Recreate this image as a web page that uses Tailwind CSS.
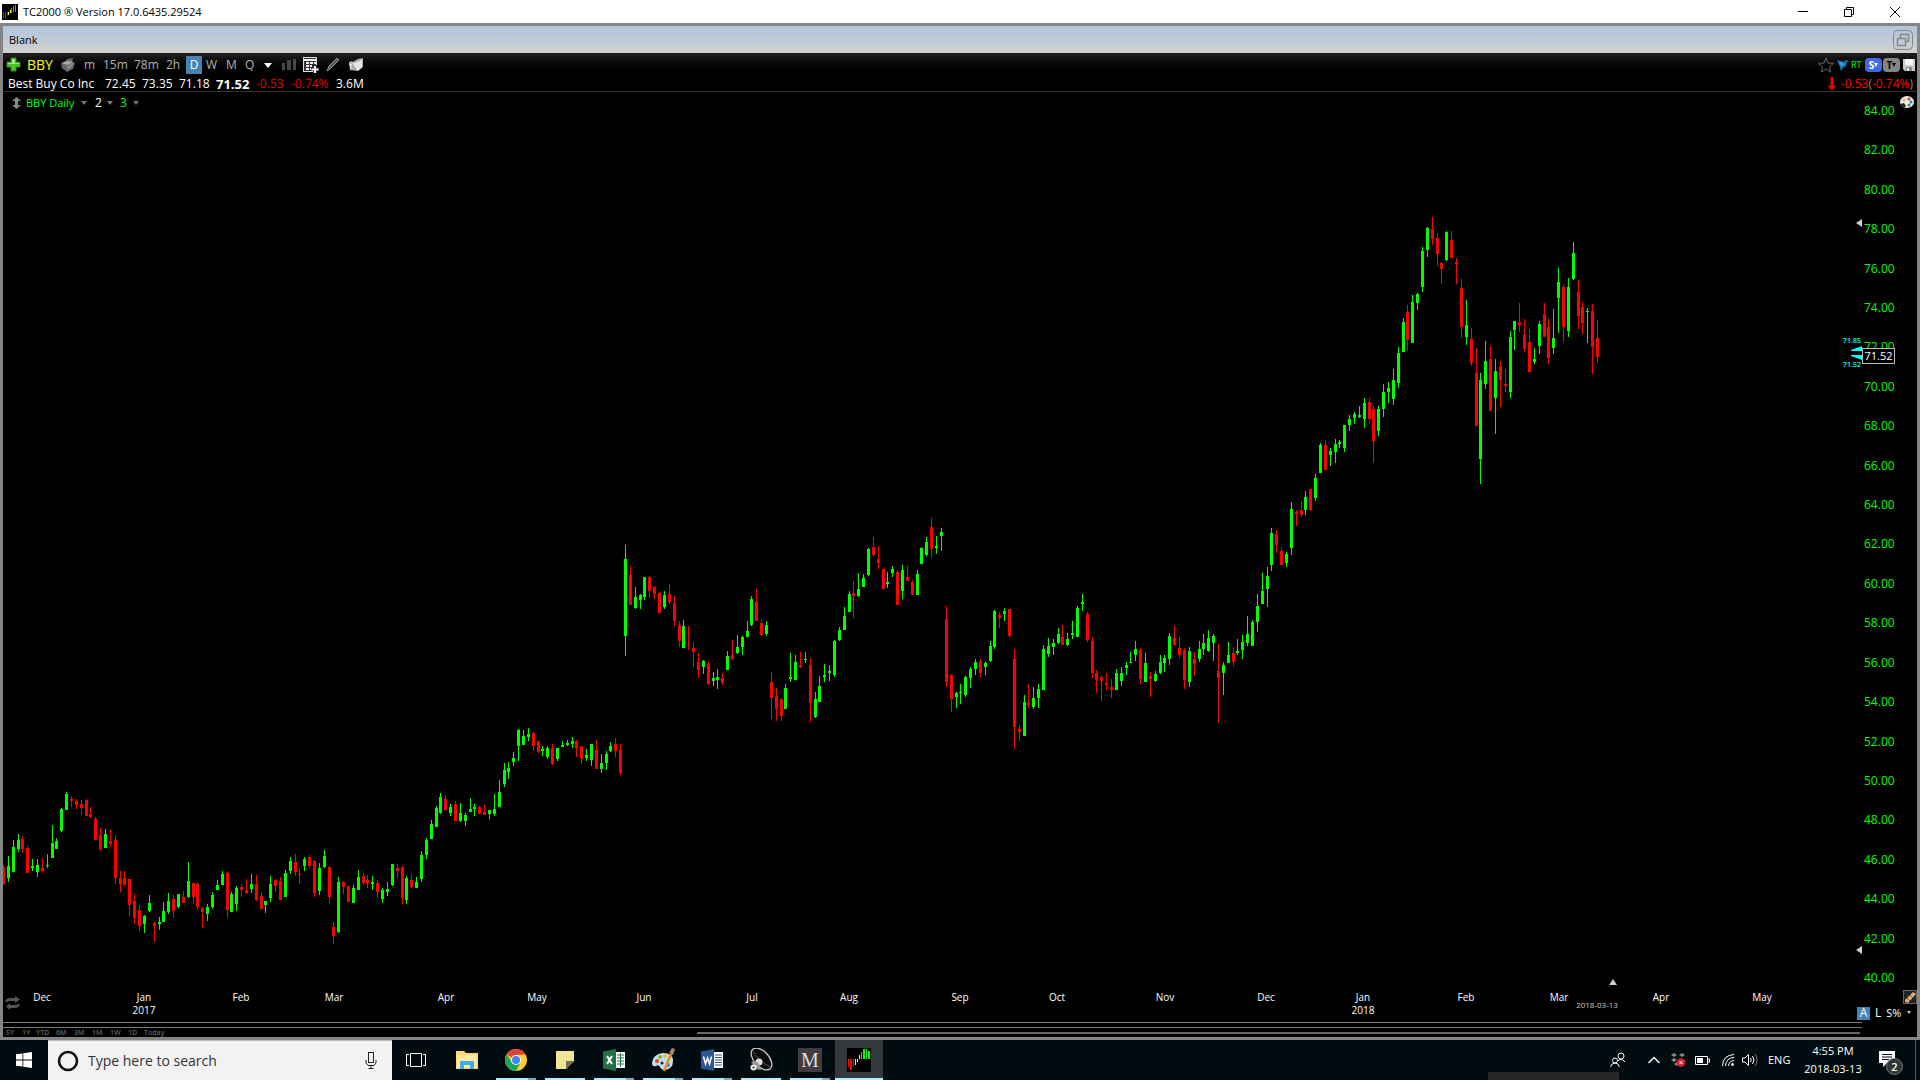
<!DOCTYPE html>
<html lang="en">
<head>
<meta charset="utf-8">
<title>TC2000 - BBY Daily</title>
<script src="https://cdn.jsdelivr.net/npm/@tailwindcss/browser@4"></script>
</head>
<body class="flex h-screen flex-col overflow-hidden bg-black font-['Open_Sans','Noto_Sans',sans-serif] text-xs leading-4 text-white">

<!-- Title bar -->
<header class="flex h-[23px] shrink-0 items-center bg-white pr-0.5 pl-0.5 text-black">
  <svg class="size-4" viewBox="0 0 16 16" shape-rendering="crispEdges"><rect width="16" height="16"/><path d="M1 8h1v6H1zM3 8h1v7H3zM5 8h1v3H5z" fill="#f00"/><path d="M6 8h1v3H6zM8 6h1v3H8z" fill="#ff0"/><path d="M9 4h1v5H9zM11 2h1v6h-1zM13 1h1v7h-1z" fill="#0d0"/></svg>
  <h1 class="ml-[5px] text-[11px]">TC2000 ® Version 17.0.6435.29524</h1>
  <div class="ml-auto flex">
    <button aria-label="Minimize" class="flex w-[46px] justify-center"><svg class="size-5" viewBox="0 0 20 20"><path d="M5 9.500h10" stroke="#000"/></svg></button>
    <button aria-label="Restore" class="flex w-[46px] justify-center"><svg class="size-5" viewBox="0 0 20 20" fill="none" stroke="#000"><path d="M5.500 7.500h7v7h-7zM7.500 7V5.500h7v7H13"/></svg></button>
    <button aria-label="Close" class="flex w-[46px] justify-center"><svg class="size-5" viewBox="0 0 20 20"><path d="M5 5l10 10M15 5L5 15" stroke="#000"/></svg></button>
  </div>
</header>

<!-- Chart window -->
<main class="flex min-h-0 flex-1 flex-col border-[3px] border-[#858585]">
  <div class="flex h-[27px] shrink-0 items-center bg-linear-to-b from-[#b0c4de] to-[#d0d0d0] px-1.5 pr-1 text-black">
    <h2 class="text-[11px]">Blank</h2>
    <button aria-label="Restore chart" class="ml-auto"><svg class="size-5" viewBox="0 0 20 20" fill="none" stroke="#888"><rect x=".5" y=".5" width="19" height="19" rx="4"/><path d="M4.500 8.500h8v7h-8zM7.500 8V4.500h8v7H13" stroke-width="1.500"/></svg></button>
  </div>

  <div class="flex h-[23px] shrink-0 items-center bg-linear-to-b from-[#202020] to-black pl-[3px] text-[#b0b0b0]">
    <button aria-label="Add" class="w-[21px]"><svg class="size-[15px]" viewBox="0 0 15 15"><path d="M5 1h5v4h4v5h-4v4H5v-4H1V5h4z" fill="#4ac02c" stroke="#2a8a18"/><path d="M6 2h3v4h4v1H2V6h4z" fill="#a0e880"/></svg></button>
    <button class="w-[33px] text-left text-sm text-[#ff0]">BBY</button>
    <button aria-label="Flag" class="w-6"><svg class="size-4" viewBox="0 0 16 16"><path d="M1 6l5-2 1-2 6-1-1 4 3 1-2 6-6 3-5-4z" fill="#666"/><path d="M2 6l5 2 7-3-7-1z" fill="#aaa"/><path d="M7 9l6-3-1 4-5 3z" fill="#888"/></svg></button>
    <button class="w-[19px] text-left">m</button>
    <button class="w-[31px] text-left">15m</button>
    <button class="w-8 text-left">78m</button>
    <button class="w-5 text-left">2h</button>
    <button class="mr-1 h-[18px] w-4 bg-[#4682b4] text-center text-white">D</button>
    <button class="w-5 text-left">W</button>
    <button class="w-[19px] text-left">M</button>
    <button class="w-[19px] text-left">Q</button>
    <button aria-label="More" class="w-[18px]"><svg class="h-2 w-2" viewBox="0 0 8 8"><path d="M0 2h8L4 7z" fill="#fff"/></svg></button>
    <button aria-label="Bars" class="w-[21px]"><svg class="h-3 w-3.5" viewBox="0 0 14 12" fill="#484848"><rect y="4" width="3" height="7"/><rect x="5" y="1" width="4" height="10"/><rect x="11" width="3" height="11"/></svg></button>
    <button aria-label="Scan table" class="w-[23px]"><svg class="size-4" viewBox="0 0 16 16"><rect x=".5" y=".5" width="13" height="14" fill="#333" stroke="#ddd"/><path d="M1 3h12" stroke="#eee" stroke-width="2"/><path d="M3 5h3v2H3zM7 5h3v2H7zM11 5h2v2h-2zM3 8h3v2H3zM7 8h2v2H7zM3 11h3v2H3zM7 11h2v2H7z" fill="#eee"/><path d="M12 8v8M8 12h8" stroke="#222" stroke-width="4"/><path d="M12 9v7M8.500 12.500h7" stroke="#fff" stroke-width="2"/></svg></button>
    <button aria-label="Draw" class="w-[22px]"><svg class="size-[15px]" viewBox="0 0 15 15"><path d="M1 14l2-5 8-8 2 2-8 8z" fill="#555" stroke="#999"/></svg></button>
    <button aria-label="Folders"><svg class="h-3.5 w-4" viewBox="0 0 16 14"><path d="M1 4l3-1 1 1 3-2 2-1 5-1v9l-5 4-8-1z" fill="#aaa"/><path d="M4 5l6-1 4-3v8l-4 4z" fill="#e4e4e4"/><path d="M1 5l3 1-1 7z" fill="#ddd"/></svg></button>
    <div class="ml-auto flex items-center pr-0.5">
      <button aria-label="Favorite" class="mr-[3px]"><svg class="size-4" viewBox="0 0 16 16"><path d="M8 1l2 5 5.500.3-4 3.500 1.200 5.200L8 12l-4.700 3 1.200-5.200-4-3.500L6 6z" fill="none" stroke="#666"/></svg></button>
      <button aria-label="Share" class="mr-0.5"><svg class="size-3" viewBox="0 0 12 12"><path d="M0 1l7 2 2-2 3 1-2 1-1 4-3 2-2 3-1-4z" fill="#1677b8"/><path d="M2 3l6 2-4 2z" fill="#48a8e0"/></svg></button>
      <span class="w-3.5 text-[9px] text-[#0f0]">RT</span>
      <button class="mr-px flex h-3.5 w-[17px] items-center justify-center rounded-sm bg-[#4169e1] text-[10px] font-bold text-white">S<svg class="size-1" viewBox="0 0 4 4"><path d="M0 0h4L2 4z" fill="#fff"/></svg></button>
      <button class="mr-[3px] flex h-3.5 w-[17px] items-center justify-center rounded-sm bg-[#858585] text-[10px] font-bold text-black">T<svg class="size-1" viewBox="0 0 4 4"><path d="M0 0h4L2 4z"/></svg></button>
      <button aria-label="Save"><svg class="size-3" viewBox="0 0 12 12"><path d="M0 0h12v12H2l-2-2z" fill="#ccc"/><path d="M2 0h8v6H2z" fill="#f5f5f5"/><path d="M3 8h6v4H3z" fill="#888"/><path d="M4 9h2v3H4z" fill="#eee"/></svg></button>
    </div>
  </div>

  <div class="flex h-4 shrink-0 items-center border-b border-[#333] pl-[5px]">
    <span class="w-[97px]">Best Buy Co Inc</span>
    <span class="w-[37px]">72.45</span>
    <span class="w-[37px]">73.35</span>
    <span class="w-[37px]">71.18</span>
    <span class="w-10 text-[13px] font-bold">71.52</span>
    <span class="w-[35px] text-[#e00000]">-0.53</span>
    <span class="w-[45px] text-[#e00000]">-0.74%</span>
    <span>3.6M</span>
    <div class="ml-auto flex items-center pr-1 text-[#f00]">
      <svg class="mr-1 h-3.5 w-2.5" viewBox="0 0 10 14"><path d="M3 0h4v8h3l-5 6-5-6h3z" fill="#500"/><path d="M4 0h2v9h3l-4 4-4-4h3z" fill="#f00"/></svg>
      <span>-0.53<span class="text-[#888]">(</span>-0.74%<span class="text-[#888]">)</span></span>
    </div>
  </div>

  <section class="flex min-h-0 flex-1">
    <div class="relative min-w-0 flex-1">
      <svg id="candles" class="absolute inset-0 size-full" viewBox="3 92 1859 894" preserveAspectRatio="none" shape-rendering="crispEdges" aria-label="BBY daily candlestick chart"></svg>
      <div class="relative flex items-center pt-[3px] pl-[9px] text-[#0f0]">
        <svg class="mr-[5px] h-3 w-[9px]" viewBox="0 0 9 12" fill="#888"><path d="M4.500 0L9 4H6v4h3l-4.500 4L0 8h3V4H0z"/></svg>
        <button class="w-[55px] text-left text-[11px]">BBY Daily</button>
        <svg class="mr-2 size-1.5" viewBox="0 0 6 6"><path d="M0 1h6L3 5z" fill="#777"/></svg>
        <button class="w-3 text-left text-white">2</button>
        <svg class="mr-[7px] size-1.5" viewBox="0 0 6 6"><path d="M0 1h6L3 5z" fill="#777"/></svg>
        <button class="w-[13px] text-left">3</button>
        <svg class="size-1.5" viewBox="0 0 6 6"><path d="M0 1h6L3 5z" fill="#777"/></svg>
      </div>
      <!-- last price markers -->
      <div class="absolute right-0 top-[244px] flex flex-col items-end text-[7px] leading-[10px] font-semibold text-[#0ff]">
        <span class="pr-px">71.85</span>
        <svg class="h-3.5 w-[11px]" viewBox="0 0 11 14" fill="#0ff"><path d="M0 4l11-4v5H0zM0 9h11v5L0 10z"/></svg>
        <span class="pr-px">71.52</span>
      </div>
      <svg class="absolute right-0 top-[127px] h-2 w-1.5" viewBox="0 0 6 8"><path d="M6 0v8L0 4z" fill="#ccc"/></svg>
      <svg class="absolute right-0 bottom-8 h-2 w-1.5" viewBox="0 0 6 8"><path d="M6 0v8L0 4z" fill="#ccc"/></svg>
    </div>
    <!-- price axis -->
    <div class="relative flex w-[55px] flex-col justify-between pt-[11px] pl-0.5 text-xs text-[#0f0]" id="prices">
      <svg class="absolute right-[3px] top-1 h-3 w-3.5" viewBox="0 0 14 12"><ellipse cx="7" cy="6" rx="7" ry="6" fill="#eee"/><circle cx="4" cy="4" r="1.500" fill="#e8b020"/><circle cx="9" cy="3" r="1.500" fill="#d33"/><circle cx="11" cy="6" r="1.500" fill="#28c"/><circle cx="9" cy="9" r="1.500" fill="#393"/><path d="M0 8l4-1 2 3-2 2z" fill="#222"/></svg>
      <span class="absolute left-0 top-64 z-10 h-4 w-[33px] border border-[#bbb] bg-black text-center text-[11px] leading-[14px] text-white">71.52</span>
    </div>
  </section>

  <!-- time axis -->
  <section class="flex h-9 shrink-0">
    <div id="months" class="relative flex-1 text-[10px] leading-[13px]">
      <svg class="absolute left-0.5 top-2.5 h-3.5 w-4" viewBox="0 0 16 14"><path d="M0 6q1-4 5-4h5V0l5 3.500L10 7V5H5Q3 5 2 6zM15 8q-1 4-5 4H5v2l-4-3.500L5 7v2h5q2 0 3-1z" fill="#555"/></svg>
    </div>
    <div class="flex w-[63px] flex-col items-end">
      <button aria-label="Erase" class="mt-1"><svg class="size-3.5" viewBox="0 0 14 14"><rect x=".5" y=".5" width="13" height="13" fill="#222" stroke="#666"/><path d="M2 10l8-8 3 2-8 9-3-1z" fill="#e0a878"/><path d="M4 8l3 3M7 5l3 3" stroke="#8a5a38"/></svg></button>
      <div class="mt-0.5 flex h-3.5 w-full items-center">
        <button class="mr-[5px] ml-[3px] h-[13px] w-[13px] bg-[#4682b4] text-center leading-3">A</button>
        <button class="mr-[5px]">L</button>
        <button class="text-[11px]">S%</button>
        <svg class="ml-auto mr-1.5 h-1 w-1" viewBox="0 0 4 4"><path d="M0 0h4L2 3z" fill="#ccc"/></svg>
      </div>
    </div>
  </section>

  <div class="mr-[55px] h-1.5 shrink-0 border-y border-[#777]"></div>
  <div class="mr-[57px] flex h-[9px] shrink-0 items-center pl-[3px] text-[7px] leading-[9px] font-semibold text-[#606060]">
    <button class="w-4 text-left">5Y</button><button class="w-3.5 text-left">1Y</button><button class="w-5 text-left">YTD</button><button class="w-[18px] text-left">6M</button><button class="w-[18px] text-left">3M</button><button class="w-[18px] text-left">1M</button><button class="w-[18px] text-left">1W</button><button class="w-4 text-left">1D</button><button class="w-6 text-left">Today</button>
    <div class="ml-[529px] h-0.5 flex-1 bg-[#666]"></div>
  </div>
</main>

<!-- Taskbar -->
<footer class="relative flex h-10 shrink-0 bg-[#000c10]">
  <button aria-label="Start" class="flex w-12 items-center justify-center"><svg class="size-4" viewBox="0 0 16 16" fill="#fff"><path d="M0 2.300L6.500 1.400V7.600H0zM7.300 1.300L16 0v7.600H7.300zM0 8.400h6.500v6.200L0 13.700zM7.300 8.400H16V16l-8.700-1.300z"/></svg></button>
  <label class="flex w-[344px] items-center border-t border-[#bbb] bg-[#f2f2f2] pr-[15px] pl-[9px]">
    <svg class="mr-[9px] size-[22px]" viewBox="0 0 22 22"><circle cx="11" cy="11" r="9" fill="none" stroke="#111" stroke-width="2.600"/></svg>
    <input aria-label="Search" placeholder="Type here to search" class="min-w-0 flex-1 text-sm text-[#333] outline-none placeholder:text-[#333]">
    <svg class="h-[17px] w-3" viewBox="0 0 12 17" fill="none" stroke="#222"><rect x="3.500" y=".5" width="5" height="10"/><path d="M1 8v3l2 2.500h6l2-2.500V8M6 13.500v3M3.500 16.500h5"/></svg>
  </label>
  <button aria-label="Task view" class="mr-[3px] flex w-12 items-center justify-center"><svg class="h-4 w-5" viewBox="0 0 20 16" fill="none" stroke="#fff"><path d="M4.500 1.500h11v13h-11zM3 2.500H.5v11H3M17 2.500h2.500v11H17"/></svg></button>
  <div class="flex gap-px">
    <button aria-label="File Explorer" class="flex w-12 items-center justify-center"><svg class="h-5 w-[22px]" viewBox="0 0 22 20"><path d="M0 1h8l2 2h12v16H0z" fill="#ffd86a"/><path d="M1 5h20v13H1z" fill="#ffe8a0"/><path d="M4 19v-7q0-1 1-1h12q1 0 1 1v7h-4v-4H8v4z" fill="#3bb0e8"/></svg></button>
    <button aria-label="Chrome" class="relative flex w-12 items-center justify-center"><svg class="size-[22px]" viewBox="0 0 22 22"><circle cx="11" cy="11" r="11" fill="#fc3"/><path d="M11 11L1.500 5.500A11 11 0 0120.500 5.500L11 6z" fill="#dc4437"/><path d="M1.500 5.500A11 11 0 0011 22l4.500-8.500L11 15 7 13z" fill="#1ea362"/><circle cx="11" cy="11" r="5" fill="#fff"/><circle cx="11" cy="11" r="4" fill="#4285f4"/></svg><span class="absolute bottom-0 left-1 h-0.5 w-10 border-r-8 border-[#7fa9b5] bg-[#aeeefc]"></span></button>
    <button aria-label="Sticky Notes" class="relative flex w-12 items-center justify-center"><svg class="size-[18px]" viewBox="0 0 18 18"><path d="M0 0h18v18H0z" fill="#f2e597"/><path d="M18 10v8h-8z" fill="#000c10"/><path d="M10 10h8l-8 8z" fill="#76704a"/></svg><span class="absolute bottom-0 left-1 h-0.5 w-10 bg-[#aeeefc]"></span></button>
    <button aria-label="Excel" class="relative flex w-12 items-center justify-center"><svg class="size-[22px]" viewBox="0 0 22 22"><path d="M12 3h10v16H12z" fill="#fff"/><path d="M14 6h7M14 9h7M14 12h7M14 15h7M17.500 4v14" stroke="#217346"/><path d="M0 2.500L13 0v22L0 19.500z" fill="#217346"/><path d="M4 7l5 8M9 7l-5 8" stroke="#fff" stroke-width="2"/></svg><span class="absolute bottom-0 left-1 h-0.5 w-10 border-r-8 border-[#7fa9b5] bg-[#aeeefc]"></span></button>
    <button aria-label="Paint" class="relative flex w-12 items-center justify-center"><svg class="h-6 w-6" viewBox="0 0 24 24"><path d="M1 15Q2 6 12 5q10 0 10 8t-8 9q-4 0-5-3t-4-1q-4 1-4-3z" fill="#c4e0f0"/><circle cx="6" cy="13" r="2" fill="#d43"/><circle cx="9" cy="9" r="2" fill="#7b3"/><circle cx="14" cy="8" r="2" fill="#eb3"/><circle cx="11" cy="15" r="1.500" fill="#123"/><circle cx="17" cy="17" r="2" fill="#48c"/><path d="M20 6l-7 17" stroke="#e88a28" stroke-width="2.500"/><path d="M18 5l3-5 3 1-2 6z" fill="#b08860"/></svg><span class="absolute bottom-0 left-1 h-0.5 w-10 border-r-8 border-[#7fa9b5] bg-[#aeeefc]"></span></button>
    <button aria-label="Word" class="relative flex w-12 items-center justify-center"><svg class="size-[22px]" viewBox="0 0 22 22"><path d="M12 3h10v16H12z" fill="#fff"/><path d="M14 6h7M14 8.500h7M14 11h7M14 13.500h7M14 16h7" stroke="#2b579a"/><path d="M0 2.500L13 0v22L0 19.500z" fill="#2b579a"/><path d="M2.500 7.500L4.500 15l2-6 2 6 2-7.500" fill="none" stroke="#fff" stroke-width="1.500"/></svg><span class="absolute bottom-0 left-1 h-0.5 w-10 border-r-8 border-[#7fa9b5] bg-[#aeeefc]"></span></button>
    <button aria-label="Audio" class="relative flex w-12 items-center justify-center"><svg class="h-6 w-6" viewBox="0 0 24 24"><ellipse cx="12.500" cy="11" rx="13" ry="7.500" transform="rotate(48 12.500 11)" fill="#0a0a0a" stroke="#ccc" stroke-width="1.300"/><path d="M4 3q4 10 18 16" fill="none" stroke="#555"/><circle cx="10" cy="14" r="3.500" fill="#ddd"/><path d="M2 14l5-1 4 4 1 5-5-1z" fill="#999"/><circle cx="4.500" cy="19.500" r="3" fill="#eee"/><circle cx="4.500" cy="19.500" r="1" fill="#222"/></svg><span class="absolute bottom-0 left-1 h-0.5 w-10 bg-[#aeeefc]"></span></button>
    <button aria-label="M" class="relative flex w-12 items-center justify-center"><span class="size-6 bg-[#403c40] text-center font-['Liberation_Serif',serif] text-xl leading-6 text-[#ddd]">M</span><span class="absolute bottom-0 left-1 h-0.5 w-10 border-r-8 border-[#7fa9b5] bg-[#aeeefc]"></span></button>
    <button aria-label="TC2000" class="relative flex w-12 items-center justify-center bg-[#33393c]"><svg class="size-6" viewBox="0 0 24 24" shape-rendering="crispEdges"><rect width="24" height="24"/><path d="M1 11h1v8H1zM3 11h2v11H3zM6 11h1v7H6z" fill="#f00"/><path d="M8 11h1v6H8zM10 11h1v3h-1zM12 7h1v4h-1z" fill="#ff0"/><path d="M14 4h1v7h-1zM16 1h2v10h-2zM19 1h1v10h-1zM21 3h2v8h-2z" fill="#0f0"/></svg><span class="absolute bottom-0 left-0 h-0.5 w-12 bg-[#aeeefc]"></span></button>
  </div>

  <div class="ml-auto flex items-center">
    <div class="mr-[22px]"><svg class="size-4" viewBox="0 0 16 16" fill="none" stroke="#fff"><circle cx="11" cy="4" r="3"/><path d="M8 9q3-4 7 1"/><circle cx="5" cy="8.500" r="2.500"/><path d="M.5 15q1-4 4.500-4t4.500 4"/></svg></div>
    <button aria-label="Show hidden icons" class="mr-[11px]"><svg class="h-2 w-3" viewBox="0 0 12 8"><path d="M.5 7L6 1.500 11.500 7" fill="none" stroke="#fff" stroke-width="1.300"/></svg></button>
    <svg class="mr-2.5 size-3.5" viewBox="0 0 14 14"><path d="M0 2l3-2 3 2-3 2zM8 2l3-2 3 2-3 2zM0 7l3-2 3 2-3 2zM3 11l3-2 2 2-2 2z" fill="#888"/><circle cx="10" cy="9.500" r="4.300" fill="#e02030"/><path d="M8.500 8l3 3M11.500 8l-3 3" stroke="#fff"/></svg>
    <svg class="mr-3 h-[9px] w-[15px]" viewBox="0 0 15 9"><path d="M.5.5h12v8H.5zM13 3h1.500v3H13" fill="none" stroke="#fff"/><path d="M2 2h6v5H2z" fill="#fff"/></svg>
    <svg class="mr-2 size-3" viewBox="0 0 12 12" fill="none" stroke="#fff"><path d="M.5 12Q1 1 12 .5M3.500 12Q4 4 12 3.500M6.500 12Q7 7 12 6.500"/><circle cx="10.500" cy="10.500" r="1" fill="#fff"/></svg>
    <svg class="mr-2.5 h-3.5 w-4" viewBox="0 0 16 14" fill="none" stroke="#fff"><path d="M.5 5h2.500l3.500-3.500v11L3 9H.5zM8.500 5q1.500 2 0 4M10.500 3q3 4 0 8"/><path d="M13 1q4 6 0 12" stroke="#777"/></svg>
    <span class="w-9 text-[11px]">ENG</span>
    <div class="w-[58px] text-center text-[11px] leading-[18px]">4:55 PM<br>2018-03-13</div>
    <button aria-label="Notifications" class="mt-1.5 mr-3 ml-[17px]"><svg class="h-6 w-6" viewBox="0 0 24 24"><path d="M0 0h16v12H8l-4 4v-4H0z" fill="#fff"/><path d="M3 3.500h10M3 6h10M3 8.500h7" stroke="#000c10"/><circle cx="15.500" cy="15.500" r="8" fill="#303436" stroke="#777"/><text x="15.500" y="20" text-anchor="middle" font-size="11" font-weight="600" fill="#fff">2</text></svg></button>
    <div class="mr-1 h-full w-px bg-[#555]"></div>
  </div>
  <div class="absolute right-[301px] bottom-0 h-2 w-[131px] bg-[#262626]"></div>
</footer>

<script>
// Price scale labels
const prices = document.getElementById('prices');
for (let p = 84; p >= 40; p -= 2) {
  const s = document.createElement('span');
  s.textContent = p.toFixed(2);
  prices.append(s);
}

// Month labels: x centre, name, optional year
const months = document.getElementById('months');
const addLabel = (x, text, cls) => {
  const d = document.createElement('div');
  d.className = 'absolute -translate-x-1/2 text-center whitespace-nowrap ' + cls;
  d.style.left = (x - 3) / 18.51 + '%';
  d.innerHTML = text;
  months.append(d);
};
[[42,'Dec'],[144,'Jan<br>2017'],[241,'Feb'],[334,'Mar'],[446,'Apr'],[537,'May'],[644,'Jun'],[752,'Jul'],[849,'Aug'],[960,'Sep'],[1057,'Oct'],[1165,'Nov'],[1266,'Dec'],[1363,'Jan<br>2018'],[1466,'Feb'],[1559,'Mar'],[1661,'Apr'],[1762,'May']]
  .forEach(([x, t]) => addLabel(x, t, 'top-[5px]'));
addLabel(1597, '2018-03-13', 'top-3 text-[8px] text-[#ccc]');
addLabel(1613, '<svg class="h-1.5 w-2" viewBox="0 0 8 6"><path d="M4 0l4 6H0z" fill="#ccc"/></svg>', '-top-[7px]');

// Candles: direction, x, high, body top, body bottom, low; three units per pixel from each block's origin
const blocks = [
[0,780,`R 10 255 261 312 315,G 25 228 258 294 306,G 40 180 201 276 276,G 55 162 180 207 216,R 67 168 177 207 219,R 82 198 204 279 279,G 97 237 258 264 273,G 112 237 255 276 291,R 127 234 264 273 279,G 142 222 255 258 264,G 157 135 189 234 234,G 169 174 183 207 207,G 184 84 87 153 156,G 199 36 42 90 90,R 214 48 57 63 81,R 229 57 63 75 87,R 244 60 72 84 105,R 259 57 60 108 108,R 271 81 102 111 114,R 286 111 117 180 180,R 301 144 165 207 213,G 316 147 162 204 204,R 331 150 183 192 201,R 346 165 180 294 312,R 361 273 294 312 336,R 373 273 294 315 318,R 388 297 297 375 408,R 403 342 363 414 432,R 418 375 390 438 453,G 433 405 408 432 459,G 448 345 369 393 396,R 463 426 429 438 486,G 478 411 426 432 450,G 490 366 393 426 426,G 505 339 363 396 402,R 520 345 357 393 414,G 535 342 342 381 384,R 550 333 351 369 369,G 565 246 303 351 354,R 580 309 309 351 372,R 592 306 312 381 390,R 607 381 384 396 444,G 622 372 381 402 423,G 637 336 345 381 387,G 652 300 315 330 330,G 667 273 282 315 315,R 682 276 279 390 414,G 694 336 342 396 396,G 709 318 324 372 393,R 724 312 321 330 351,R 739 297 330 339 342,G 754 282 312 327 339,R 769 285 312 360 363,R 784 336 348 387 387,G 796 363 363 375 399,G 811 288 312 354 366,R 826 297 300 318 336,R 841 291 303 360 360,G 856 270 279 351 351,G 871 231 243 273 282,R 886 222 246 276 288,R 898 264 282 285 312,G 913 231 237 258 273,R 928 225 231 258 264,R 943 240 243 339 351,G 958 249 264 333 345,G 973 210 228 261 264,R 988 258 261 351 369,R 1000 426 441 468 492,G 1015 291 306 456 459,R 1030 303 306 321 342,R 1045 318 318 366 366,G 1060 315 324 369 369,G 1075 270 291 330 330,R 1090 279 288 309 315,R 1102 285 300 312 324,G 1117 288 306 312 330,R 1132 300 309 336 354,G 1147 324 330 357 369,G 1162 306 327 336 348,G 1177 252 252 315 318,R 1192 252 264 273 294,R 1207 258 261 354 372,G 1219 288 294 360 372,R 1234 282 300 321 324,G 1249 291 306 324 324,G 1264 213 225 297 306,G 1279 174 180 225 237,G 1294 120 132 177 177,G 1309 78 84 141 141,G 1321 39 51 99 102,R 1336 45 57 90 93,G 1351 72 81 99 108,R 1366 63 72 123 123,G 1381 69 99 123 126,G 1396 99 105 123 138,G 1411 54 87 96 96,G 1423 72 81 87 108`],
[320,700,`R 478 318 321 342 342,R 493 315 336 345 345,G 508 330 330 342 357,G 523 282 327 342 348,G 538 240 276 321 321,G 553 189 210 252 261,G 565 186 204 216 237,G 580 156 174 186 198,G 595 87 90 138 183,G 610 90 108 135 135,G 625 84 102 111 123,R 640 96 99 138 153,R 655 123 123 156 159,G 667 138 147 153 168,G 682 138 144 171 177,R 697 132 144 192 195,G 712 144 144 177 183,G 727 123 135 141 141,G 742 120 129 135 138,G 757 111 123 132 144,R 769 120 123 144 171,R 784 138 138 177 192,G 799 147 165 174 183,G 814 132 132 180 198,R 829 120 150 207 207,G 844 162 189 207 219,G 859 153 162 189 210,G 871 126 138 153 156,R 886 114 132 153 171,R 901 132 150 219 225`],
[610,500,`G 46 135 177 408 468,R 61 198 225 315 315,G 76 261 291 324 327,G 91 282 285 300 327,G 103 231 231 291 300,R 118 228 231 273 294,R 133 258 261 282 297,R 148 276 279 339 342,G 163 273 285 321 327,R 178 252 282 306 312,R 193 288 309 363 378,R 208 363 375 423 441,G 220 360 378 444 444,R 235 378 399 402 450,R 250 426 444 456 501,R 265 459 486 510 534,G 280 480 483 501 522,R 295 486 492 552 555,G 310 516 534 543 558,G 322 507 531 540 567,R 337 519 534 549 555,G 352 453 468 510 510,R 367 420 465 477 480,G 382 405 441 459 462,G 397 408 411 441 465,G 412 363 393 411 411,G 424 288 297 375 378,R 439 267 306 363 363,R 454 360 369 405 408,G 469 363 375 402 408,R 484 516 546 594 657,R 499 564 588 627 663,R 514 594 597 648 663,G 526 552 564 627 627,G 541 459 531 537 546,G 556 465 486 540 540,R 571 456 495 501 504,G 586 456 477 480 489,R 601 474 495 609 666,G 616 576 597 651 654,G 628 528 558 606 606,G 643 492 525 531 546,G 658 495 513 519 543,G 673 420 423 525 531,G 688 381 390 420 423,G 703 321 348 390 390,G 718 273 282 336 336,R 730 243 279 288 354,G 745 219 267 288 291,G 760 222 234 261 261,G 775 144 147 225 228,R 790 111 141 165 168,R 805 138 177 189 207,R 820 207 207 267 267,G 832 216 246 252 264,G 847 198 207 219 231,R 862 210 216 315 315,G 877 195 210 273 297,R 892 198 231 243 243,R 907 240 246 285 285,G 922 210 222 285 285,G 934 141 144 192 192,G 949 111 126 165 168,R 964 54 81 147 174,G 979 108 138 144 162,G 994 84 96 108 153,R 1009 318 357 546 561,R 1024 522 525 597 636,G 1039 576 579 591 624,G 1051 552 576 579 612,G 1066 528 531 585 591,G 1081 501 507 534 564,G 1096 477 486 507 525,R 1111 477 483 519 531,G 1126 486 489 501 525,G 1141 423 438 483 486,G 1153 330 333 441 447,R 1168 336 345 354 384,G 1183 324 333 342 363`],
[1000,580,`R 28 87 87 168 171,R 43 207 237 441 507,R 58 435 447 456 483,G 73 345 366 468 468,R 85 312 369 375 384,G 100 321 354 381 387,G 115 312 327 354 384,G 130 195 207 330 330,G 145 174 198 222 231,G 160 177 189 201 225,G 175 144 162 189 192,R 187 135 171 195 195,G 202 159 177 195 198,G 217 123 159 165 177,G 232 78 84 171 171,G 247 42 66 72 93,R 262 96 102 180 186,R 277 171 183 279 294,R 289 270 279 300 339,R 304 285 291 303 363,R 319 279 309 315 330,R 334 297 321 330 354,G 349 267 279 330 330,G 364 261 279 303 318,G 379 246 255 264 285,G 391 216 246 249 249,G 406 183 207 225 243,R 421 204 210 297 312,G 436 219 249 306 306,R 451 276 288 297 351,G 466 273 282 303 306,G 481 225 246 279 282,G 493 225 234 249 276,G 508 159 168 237 255,R 523 138 174 195 198,R 538 171 204 225 234,R 553 204 210 300 327,G 568 201 213 306 321,R 583 216 237 252 288,G 598 183 207 237 246,G 610 162 189 207 225,G 625 150 174 213 216,G 640 162 168 189 243,R 655 192 273 294 429,G 670 246 255 279 345,G 685 186 225 249 249,R 700 201 219 246 258,G 712 177 213 219 225,G 727 165 186 210 237,G 742 108 162 189 198,G 757 120 126 198 198,G 772 42 78 126 156`],
[1240,340,`G 67 699 753 792 792,G 82 681 708 747 801,G 94 564 579 675 693,R 109 570 582 615 639,R 124 621 633 675 675,G 139 636 642 669 681,G 154 486 507 624 645,R 169 510 516 522 558,R 184 483 510 525 531,G 196 453 471 510 525,R 211 447 447 510 513,G 226 402 414 474 483,G 241 309 315 399 399,R 256 300 315 390 390,G 271 324 333 345 378,G 286 297 312 336 369,G 298 300 306 312 324,G 313 255 255 324 336,G 328 225 237 255 273,G 343 216 222 234 252,G 358 198 225 231 234,G 373 174 189 237 264,R 388 174 186 237 249,R 400 198 207 303 369,G 415 198 207 273 288,G 430 132 156 207 231,G 445 126 144 156 189,G 460 87 120 177 195,G 475 21 39 129 144`],
[1400,200,`G 10 354 366 456 456,R 22 315 336 420 453,G 37 285 306 429 429,G 52 279 282 309 330,G 67 141 153 261 276,G 82 81 84 150 171,R 97 51 87 117 135,R 112 99 114 162 198,R 124 186 189 207 252,G 139 93 96 180 183,R 154 93 120 174 174,R 169 174 186 192 252,R 184 237 264 381 414,G 199 300 375 411 435,R 214 384 417 489 498,R 229 444 519 678 678,G 241 519 540 777 852,G 256 423 483 552 567,R 271 438 477 633 633,G 286 477 513 594 702,R 301 483 498 540 621,R 316 507 552 558 576,G 331 393 411 576 594,G 343 363 363 390 450,R 358 309 366 375 396,R 373 357 405 447 456,R 388 387 426 516 516,G 403 444 477 486 492,G 418 363 372 438 462,R 433 309 342 411 411,R 445 357 381 474 492,G 460 327 414 444 462,G 475 204 246 294 399,R 490 252 261 381 426,G 505 234 261 393 411,G 520 126 159 237 240,R 535 240 276 348 387,R 547 306 321 369 402,G 562 324 333 336 429,R 577 312 333 441 522,R 592 360 414 471 489`]
];
const paths = { R: '', G: '' };
for (const [ox, oy, data] of blocks) for (const c of data.split(',')) {
  const [dir, ...n] = c.split(' ');
  const x = ox + Math.floor(n[0] / 3);
  const [hi, top, bot, low] = n.slice(1).map(v => oy + v / 3);
  paths[dir] += `M${x} ${hi}h1V${low}h-1zM${x - 1} ${top}h3V${bot}h-3z`;
}
document.getElementById('candles').innerHTML =
  `<path d="${paths.R}" fill="#f00" fill-rule="nonzero"/><path d="${paths.G}" fill="#0f0" fill-rule="nonzero"/>`;
</script>
</body>
</html>
